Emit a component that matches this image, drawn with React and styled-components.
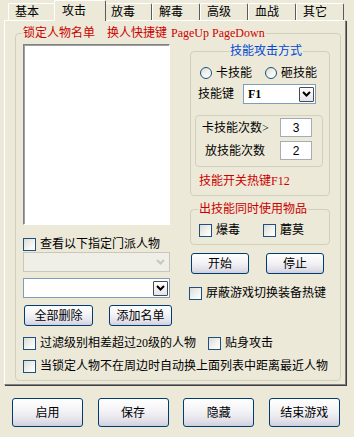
import React from 'react';
import styled, { createGlobalStyle } from 'styled-components';

const GlobalStyle = createGlobalStyle`
  html, body {
    margin: 0;
    padding: 0;
    background: #ece9d8;
  }
  body {
    font-family: "Liberation Serif", "Noto Sans CJK SC", serif;
    font-size: 12px;
    line-height: 14px;
    color: #000;
  }
`;

const RED = '#cc0000';
const BLUE = '#0046d5';

const Window = styled.div`
  width: 354px;
  height: 437px;
  display: flex;
  flex-direction: column;
  overflow: hidden;
  background: #ece9d8;
`;

const TabStrip = styled.div`
  display: flex;
  align-items: flex-end;
  height: 20px;
  padding-left: 8px;
`;

const Tab = styled.div`
  box-sizing: border-box;
  flex: none;
  position: relative;
  z-index: ${({ $active }) => ($active ? 1 : 0)};
  width: ${({ $active }) => ($active ? '52px' : '48px')};
  height: ${({ $active }) => ($active ? '21px' : '17px')};
  margin: ${({ $active }) => ($active ? '0 -2px -1px' : '0')};
  padding: ${({ $active }) => ($active ? '3px 0 0 7px' : '1px 0 0 6px')};
  border: 1px solid;
  border-color: #fff #5a5a5a transparent #fff;
  border-bottom: none;
  border-radius: 2px 2px 0 0;
  background: #ece9d8;
  white-space: nowrap;
`;

const Panel = styled.div`
  width: 342px;
  box-sizing: border-box;
  margin-left: 4px;
  padding: 5px 4px 3px 10px;
  border: 1px solid;
  border-color: #fff #808080 #808080 #fff;
  box-shadow: 1px 1px 0 #404040;
`;

const OuterGroup = styled.fieldset`
  margin: 0;
  min-width: 0;
  padding: 4px 10px 7px 7px;
  border: 1px solid #d0d0bf;
  border-radius: 4px;
`;

const Legend = styled.legend`
  padding: 0 1px;
  margin: 0 0 0 ${({ $offset }) => $offset ?? -1}px;
  color: ${({ $color }) => $color};
  line-height: 14px;
  white-space: nowrap;
`;

const Spaced = styled.span`
  margin-left: ${({ $gap }) => $gap}px;
`;

const Columns = styled.div`
  display: flex;
  gap: 20px;
  align-items: flex-start;
`;

const LeftColumn = styled.div`
  width: 147px;
  flex: none;
  display: flex;
  flex-direction: column;
`;

const RightColumn = styled.div`
  width: 140px;
  flex: none;
  display: flex;
  flex-direction: column;
`;

const ListBox = styled.div`
  box-sizing: border-box;
  height: 181px;
  background: #fff;
  border: 1px solid;
  border-color: #808080 #fff #fff #808080;
  box-shadow: inset 1px 1px 0 #a0a0a0;
`;

const CheckRow = styled.label`
  display: flex;
  align-items: center;
  gap: 4px;
  height: 14px;
  white-space: nowrap;
  margin-top: ${({ $top }) => $top || 0}px;
  margin-left: ${({ $left }) => $left || 0}px;
`;

const CheckBox = styled.span`
  box-sizing: border-box;
  flex: none;
  width: 13px;
  height: 13px;
  border: 1px solid #1c5180;
  background: linear-gradient(135deg, #dcdcd7 0%, #f4f4f0 60%, #ffffff 100%);
`;

const Radio = styled.span`
  box-sizing: border-box;
  flex: none;
  width: 12px;
  height: 12px;
  border-radius: 50%;
  border: 1px solid #1c5180;
  background: linear-gradient(135deg, #dcdcd7 0%, #f6f6f2 60%, #ffffff 100%);
`;

const Combo = styled.div`
  box-sizing: border-box;
  flex: none;
  display: flex;
  align-items: center;
  width: ${({ $width }) => $width}px;
  height: 20px;
  padding: 1px;
  margin-top: ${({ $top }) => $top || 0}px;
  border: 1px solid ${({ $disabled }) => ($disabled ? '#c9c7ba' : '#7f9db9')};
  background: ${({ $disabled }) => ($disabled ? '#f0efe7' : '#fff')};
`;

const ComboText = styled.span`
  flex: 1;
  padding-left: 3px;
  font-weight: bold;
`;

const ComboButton = styled.span`
  box-sizing: border-box;
  flex: none;
  display: flex;
  align-items: center;
  justify-content: center;
  width: 15px;
  height: 15px;
  border: 1px solid ${({ $disabled }) => ($disabled ? 'transparent' : '#4a4a4a')};
  border-radius: 1px;
  background: ${({ $disabled }) =>
    $disabled ? 'transparent' : 'linear-gradient(180deg, #ffffff 0%, #e4e4ee 100%)'};
`;

const Chevron = ({ disabled }) => (
  <svg width="9" height="6" viewBox="0 0 9 6">
    <polyline
      points="1,1 4.5,4.5 8,1"
      fill="none"
      stroke={disabled ? '#c9c7ba' : '#000'}
      strokeWidth="2"
    />
  </svg>
);

const ButtonRow = styled.div`
  display: flex;
  gap: ${({ $gap }) => $gap}px;
  margin-top: ${({ $top }) => $top}px;
  padding-left: 1px;
`;

const Button = styled.button`
  box-sizing: border-box;
  flex: none;
  width: ${({ $w }) => $w}px;
  height: ${({ $h }) => $h}px;
  padding: 0;
  border: 1px solid #003c74;
  border-radius: 3px;
  background: linear-gradient(180deg, #ffffff 0%, #f3f3f6 45%, #e2e1ea 80%, #cfcedc 100%);
  font: inherit;
  color: #000;
`;

const SkillGroup = styled.fieldset`
  margin: 0;
  min-width: 0;
  padding: 8px 6px 7px 4px;
  border: 1px solid #d0d0bf;
  border-radius: 4px;
`;

const RadioRow = styled.div`
  display: flex;
  align-items: center;
  gap: 13px;
  height: 14px;
  margin-left: 5px;
  white-space: nowrap;
`;

const RadioLabel = styled.label`
  flex: none;
  display: flex;
  align-items: center;
  gap: 4px;
`;

const KeyRow = styled.div`
  display: flex;
  align-items: center;
  gap: 9px;
  margin: 4px 0 0 3px;
  white-space: nowrap;
`;

const CountBox = styled.div`
  box-sizing: border-box;
  width: 128px;
  height: 52px;
  margin-top: 11px;
  padding: 2px 10px 0 6px;
  display: flex;
  flex-direction: column;
  gap: 4px;
  border: 1px solid #d0d0bf;
  border-radius: 4px;
`;

const CountRow = styled.div`
  display: flex;
  align-items: center;
  justify-content: space-between;
  padding-left: ${({ $indent }) => $indent || 0}px;
  white-space: nowrap;
`;

const NumberBox = styled.div`
  box-sizing: border-box;
  width: 32px;
  height: 19px;
  display: flex;
  align-items: center;
  justify-content: center;
  background: #fff;
  border: 1px solid #a5acb5;
  font-family: "Liberation Sans", sans-serif;
`;

const Hotkey = styled.div`
  margin: 7px 0 0 4px;
  color: ${RED};
  white-space: nowrap;
`;

const ItemGroup = styled.fieldset`
  margin: 6px 0 0;
  min-width: 0;
  padding: 7px 4px 7px 8px;
  border: 1px solid #d0d0bf;
  border-radius: 4px;
`;

const ItemRow = styled.div`
  display: flex;
  gap: 23px;
`;

const OptionRow = styled.div`
  display: flex;
  margin-top: ${({ $top }) => $top}px;
`;

const BottomBar = styled.div`
  display: flex;
  gap: 14.6px;
  margin-top: 13px;
  padding-left: 12px;
`;

const Check = ({ children, top, left }) => (
  <CheckRow $top={top} $left={left}>
    <CheckBox />
    <span>{children}</span>
  </CheckRow>
);

const DropDown = ({ width, value, disabled, top }) => (
  <Combo $width={width} $disabled={disabled} $top={top}>
    <ComboText>{value}</ComboText>
    <ComboButton $disabled={disabled}>
      <Chevron disabled={disabled} />
    </ComboButton>
  </Combo>
);

const tabs = ['基本', '攻击', '放毒', '解毒', '高级', '血战', '其它'];

export default function App() {
  return (
    <Window>
      <GlobalStyle />
      <TabStrip>
        {tabs.map((t) => (
          <Tab key={t} $active={t === '攻击'}>
            {t}
          </Tab>
        ))}
      </TabStrip>
      <Panel>
        <OuterGroup>
          <Legend $color={RED}>
            锁定人物名单<Spaced $gap={12}>换人快捷键</Spaced>
            <Spaced $gap={4}>PageUp PageDown</Spaced>
          </Legend>
          <Columns>
            <LeftColumn>
              <ListBox />
              <Check top={12}>查看以下指定门派人物</Check>
              <DropDown width={147} disabled top={1} />
              <DropDown width={147} top={6} />
              <ButtonRow $gap={16} $top={7}>
                <Button $w={69} $h={21}>全部删除</Button>
                <Button $w={63} $h={21}>添加名单</Button>
              </ButtonRow>
            </LeftColumn>
            <RightColumn>
              <SkillGroup>
                <Legend $offset={34} $color={BLUE}>技能攻击方式</Legend>
                <RadioRow>
                  <RadioLabel>
                    <Radio />
                    卡技能
                  </RadioLabel>
                  <RadioLabel>
                    <Radio />
                    砸技能
                  </RadioLabel>
                </RadioRow>
                <KeyRow>
                  <span>技能键</span>
                  <DropDown width={73} value="F1" />
                </KeyRow>
                <CountBox>
                  <CountRow>
                    <span>卡技能次数&gt;</span>
                    <NumberBox>3</NumberBox>
                  </CountRow>
                  <CountRow $indent={3}>
                    <span>放技能次数</span>
                    <NumberBox>2</NumberBox>
                  </CountRow>
                </CountBox>
                <Hotkey>技能开关热键F12</Hotkey>
              </SkillGroup>
              <ItemGroup>
                <Legend $color={RED}>出技能同时使用物品</Legend>
                <ItemRow>
                  <Check>爆毒</Check>
                  <Check>蘑莫</Check>
                </ItemRow>
              </ItemGroup>
              <ButtonRow $gap={17} $top={8}>
                <Button $w={58} $h={21}>开始</Button>
                <Button $w={58} $h={21}>停止</Button>
              </ButtonRow>
              <Check top={12} left={-1}>屏蔽游戏切换装备热键</Check>
            </RightColumn>
          </Columns>
          <OptionRow $top={10}>
            <Check>过滤级别相差超过20级的人物</Check>
            <Check left={12}>贴身攻击</Check>
          </OptionRow>
          <OptionRow $top={9}>
            <Check>当锁定人物不在周边时自动换上面列表中距离最近人物</Check>
          </OptionRow>
        </OuterGroup>
      </Panel>
      <BottomBar>
        <Button $w={71} $h={29}>启用</Button>
        <Button $w={71} $h={29}>保存</Button>
        <Button $w={71} $h={29}>隐藏</Button>
        <Button $w={71} $h={29}>结束游戏</Button>
      </BottomBar>
    </Window>
  );
}
